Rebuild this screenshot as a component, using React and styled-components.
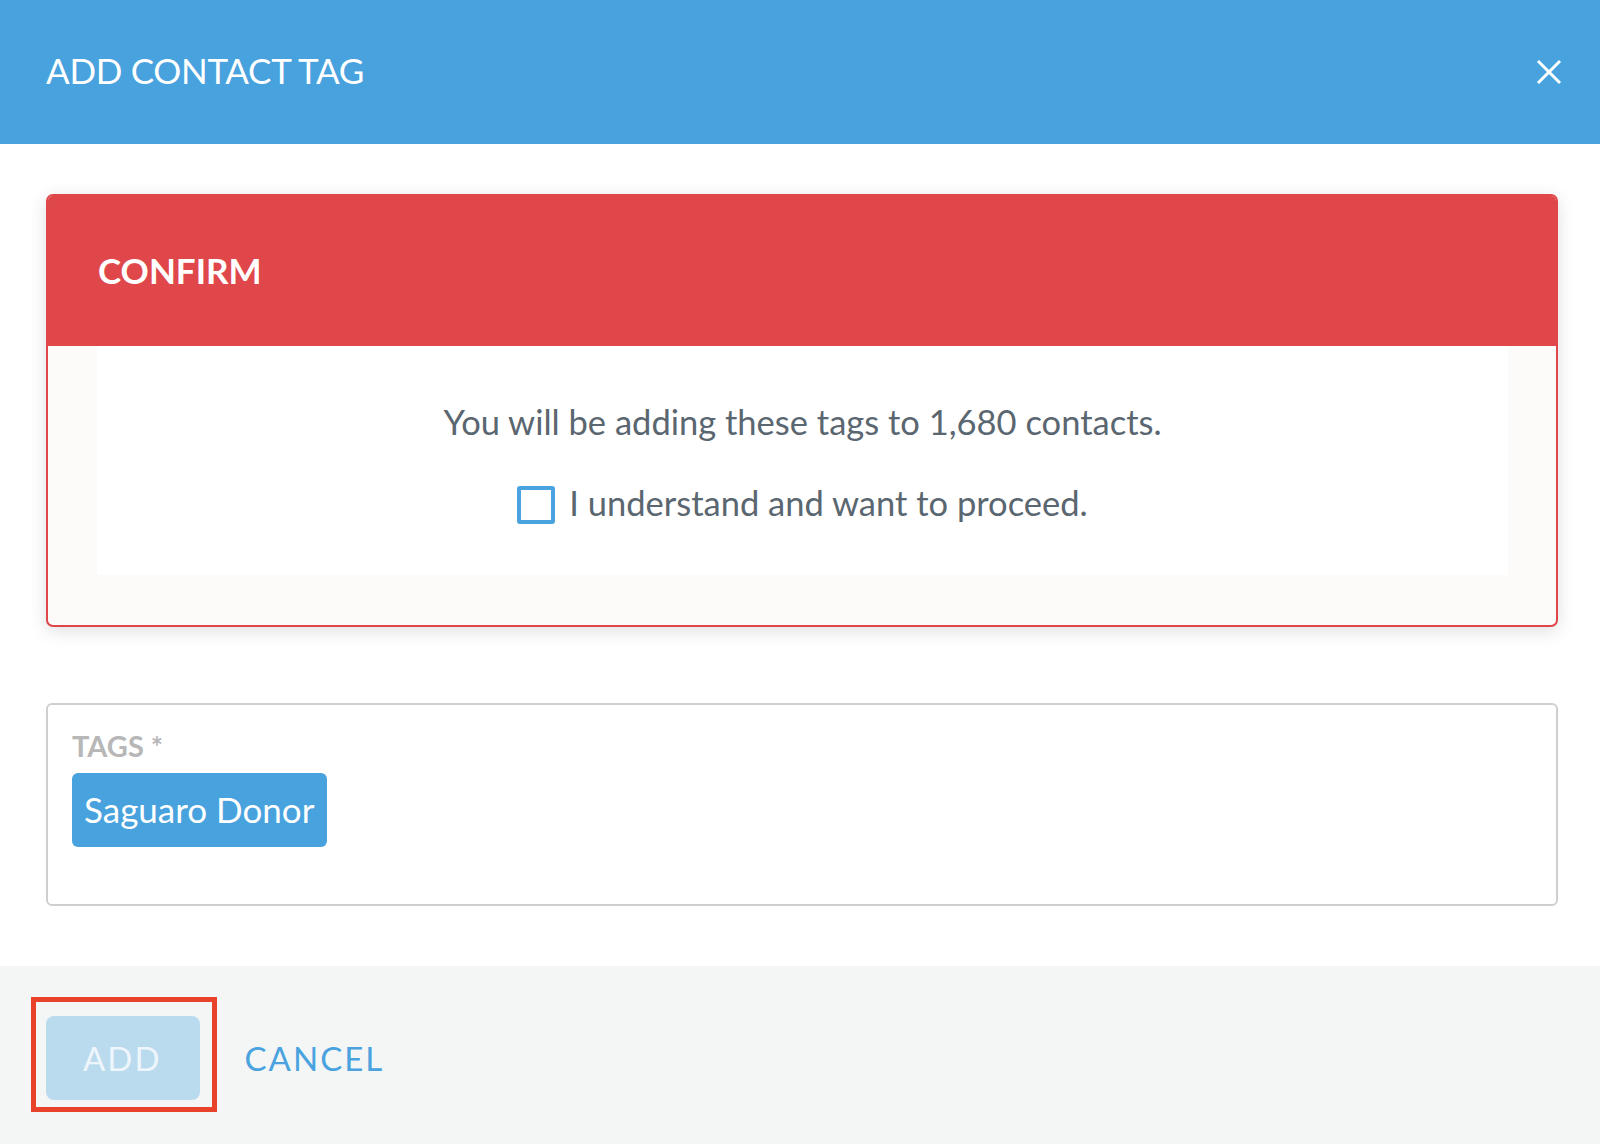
import React from "react"
import styled, { createGlobalStyle } from "styled-components"

const Global = createGlobalStyle`
  html, body { margin: 0; padding: 0; background: #fff; }
  body { font-family: Lato, "Noto Sans", sans-serif; }
  * { box-sizing: border-box; }
`

const Modal = styled.div`
  width: 1600px;
  min-height: 1144px;
  display: flex;
  flex-direction: column;
  background: #fff;
`

const Header = styled.div`
  height: 144px;
  background: #47a2de;
  display: flex;
  align-items: center;
  justify-content: space-between;
  padding: 0 38px 0 46px;
  color: #fff;
  h1 {
    margin: 0 0 5px;
    font-size: 35px;
    font-weight: 400;
    letter-spacing: -0.3px;
  }
`

const CloseBtn = styled.button`
  border: none;
  background: none;
  padding: 0;
  width: 26px;
  height: 26px;
  cursor: pointer;
  display: flex;
`

const Content = styled.div`
  flex: 1;
  padding: 50px 42px 60px 46px;
  display: flex;
  flex-direction: column;
  gap: 76px;
`

const ConfirmCard = styled.div`
  border: 2px solid #e0474a;
  border-radius: 7px;
  overflow: hidden;
  background: #fcfbfa;
  box-shadow: 0 4px 18px rgba(0, 0, 0, 0.13);
`

const ConfirmHead = styled.div`
  background: #e0474a;
  height: 152px;
  margin: -2px -2px 0;
  display: flex;
  align-items: center;
  padding-left: 52px;
  color: #fff;
  font-size: 35px;
  font-weight: 700;
`

const ConfirmBody = styled.div`
  margin: 0 48px 50px 49px;
  background: #fff;
  height: 229px;
  display: flex;
  flex-direction: column;
  align-items: center;
  padding-top: 56px;
  gap: 40px;
  color: #5a6670;
  font-size: 34.5px;
  p { margin: 0; line-height: 40px; }
`

const CheckRow = styled.label`
  display: flex;
  align-items: center;
  gap: 14px;
  line-height: 40px;
  cursor: pointer;
`

const Box = styled.span`
  width: 38px;
  height: 38px;
  border: 4px solid #4aa3df;
  border-radius: 3px;
  background: #fff;
  margin-top: 4px;
`

const TagsField = styled.div`
  border: 2px solid #cfcfcf;
  border-radius: 6px;
  height: 203px;
  padding: 24px 24px;
`

const FieldLabel = styled.div`
  color: #b7b7b7;
  font-size: 29px;
  font-weight: 700;
  line-height: 34px;
  margin-bottom: 10px;
  span { margin-left: 7px; }
`

const Chip = styled.span`
  display: inline-flex;
  align-items: center;
  height: 74px;
  padding: 0 13px 2px 12px;
  background: #48a2de;
  border-radius: 6px;
  color: #fff;
  font-size: 35px;
`

const Footer = styled.div`
  height: 179px;
  background: #f4f6f6;
  display: flex;
  align-items: center;
  padding: 0 0 0 46px;
  gap: 45px;
`

const Highlight = styled.span`
  position: relative;
  display: inline-flex;
  &::after {
    content: "";
    position: absolute;
    top: -15px;
    left: -15px;
    right: -17px;
    bottom: -12px;
    border: 5px solid #e8432a;
    pointer-events: none;
  }
`

const Button = styled.button`
  border: none;
  font-family: inherit;
  font-size: 33px;
  letter-spacing: 2px;
  text-transform: uppercase;
  cursor: pointer;
  background: ${p => (p.primary ? "#badaee" : "transparent")};
  color: ${p => (p.primary ? "#eef6fc" : "#4aa3df")};
  border-radius: 8px;
  height: 84px;
  padding: ${p => (p.primary ? "0 38px 0 37px" : "0")};
  margin-top: 4px;
`

export default function App() {
  return (
    <Modal>
      <Global />
      <Header>
        <h1>ADD CONTACT TAG</h1>
        <CloseBtn aria-label="Close">
          <svg width="26" height="26" viewBox="0 0 26 26">
            <path d="M2 2 L24 24 M24 2 L2 24" stroke="#fff" strokeWidth="3" />
          </svg>
        </CloseBtn>
      </Header>
      <Content>
        <ConfirmCard>
          <ConfirmHead>CONFIRM</ConfirmHead>
          <ConfirmBody>
            <p>You will be adding these tags to 1,680 contacts.</p>
            <CheckRow>
              <Box />
              I understand and want to proceed.
            </CheckRow>
          </ConfirmBody>
        </ConfirmCard>
        <TagsField>
          <FieldLabel>
            TAGS<span>*</span>
          </FieldLabel>
          <Chip>Saguaro Donor</Chip>
        </TagsField>
      </Content>
      <Footer>
        <Highlight>
          <Button primary disabled>Add</Button>
        </Highlight>
        <Button>Cancel</Button>
      </Footer>
    </Modal>
  )
}
